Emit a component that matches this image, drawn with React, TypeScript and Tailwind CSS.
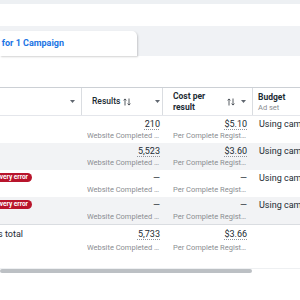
import type { ReactNode } from "react";

type Row = {
  results: string;
  cost: string;
  error?: boolean;
  shaded?: boolean;
};

const rows: Row[] = [
  { results: "210", cost: "$5.10" },
  { results: "5,523", cost: "$3.60", shaded: true },
  { results: "—", cost: "—", error: true },
  { results: "—", cost: "—", error: true, shaded: true },
];

function Caret() {
  return (
    <svg width="5" height="3" viewBox="0 0 5 3" className="shrink-0">
      <path d="M0 0h5L2.5 3z" fill="#606770" />
    </svg>
  );
}

function SortIcon() {
  return (
    <svg width="8" height="8" viewBox="0 0 8 8" className="shrink-0">
      <path
        d="M2 7.5V1M0.6 2.4L2 0.9l1.4 1.5M6 0.5V7M4.6 5.6L6 7.1l1.4-1.5"
        stroke="#444950"
        strokeWidth="0.9"
        fill="none"
      />
    </svg>
  );
}

function Value({ children }: { children: ReactNode }) {
  const dash = children === "—";
  return (
    <div className="h-[11px] text-[9px] leading-[11px] text-[#1c2b33] whitespace-nowrap">
      <span className={dash ? "" : "underline decoration-dotted decoration-[#90949c] underline-offset-2"}>
        {children}
      </span>
    </div>
  );
}

function Sub({ children }: { children: ReactNode }) {
  return (
    <div className="mt-[1px] max-w-[74px] ml-auto truncate text-[7.5px] leading-[9px] text-[#8a8d91]">
      {children}
    </div>
  );
}

export default function App() {
  return (
    <div className="h-[300px] w-[300px] overflow-hidden bg-white font-[Roboto,sans-serif]">
      <div className="h-[4px] bg-[#edf0f3]" />
      <div className="h-[22px] bg-white" />
      <div className="h-[30px] bg-[#f0f2f5] pt-[5px]">
        <div className="flex h-[25px] w-[137px] items-center justify-end overflow-hidden rounded-tr-[5px] bg-white pr-[73px] shadow-[1px_1px_2px_rgba(0,0,0,0.18)]">
          <span className="whitespace-nowrap text-[9px] font-bold text-[#1b74e4]">
            Ad sets for 1 Campaign
          </span>
        </div>
      </div>
      <div className="h-[31px]" />

      <div className="w-[420px]">
        <div className="grid h-[29px] grid-cols-[82px_81px_90px_167px] border-y border-t-[#ccd0d5] border-b-[#e4e6eb] text-[8.5px] font-bold text-[#1c2b33]">
          <div className="flex items-center justify-end border-r border-[#dadde1] pr-[6px]">
            <Caret />
          </div>
          <div className="flex items-center border-r border-[#dadde1] pl-[10px] pr-[2px]">
            <span className="font-medium">Results</span>
            <span className="ml-[3px]">
              <SortIcon />
            </span>
            <span className="ml-auto">
              <Caret />
            </span>
          </div>
          <div className="flex items-center border-r border-[#dadde1] pl-[10px] pr-[6px]">
            <div className="leading-[11px]">
              Cost per
              <br />
              result
            </div>
            <span className="ml-auto mr-[6px]">
              <SortIcon />
            </span>
            <Caret />
          </div>
          <div className="flex flex-col justify-center pl-[5px]">
            <span className="leading-[11px]">Budget</span>
            <span className="text-[7.5px] font-normal leading-[9px] text-[#8a8d91]">Ad set</span>
          </div>
        </div>

        {rows.map((row, i) => (
          <div
            key={i}
            className={`grid h-[27px] grid-cols-[82px_81px_90px_167px] pt-[3px] ${
              row.shaded ? "bg-[#f2f3f5]" : "bg-white"
            }`}
          >
            <div className="flex justify-end overflow-hidden pr-[50px]">
              {row.error && (
                <span className="h-[9px] whitespace-nowrap rounded-full bg-[#b8152c] px-[4px] text-[6.5px] font-bold leading-[9px] text-white">
                  Delivery error
                </span>
              )}
            </div>
            <div className="pl-[5px] pr-[3px] text-right">
              <Value>{row.results}</Value>
              <Sub>Website Completed Registrations</Sub>
            </div>
            <div className="pl-[10px] pr-[6px] text-right">
              <Value>{row.cost}</Value>
              <Sub>Per Complete Registration</Sub>
            </div>
            <div className="whitespace-nowrap pl-[6px] text-[9px] leading-[11px] text-[#1c2b33]">
              Using campaign budget
            </div>
          </div>
        ))}

        <div className="grid h-[34px] grid-cols-[82px_81px_90px_167px] border-t border-[#dadde1] pt-[4px]">
          <div className="flex justify-end overflow-hidden pr-[59px]">
            <span className="whitespace-nowrap text-[9px] leading-[11px] text-[#1c2b33]">
              Results from 4 ad sets total
            </span>
          </div>
          <div className="pl-[5px] pr-[3px] text-right">
            <Value>5,733</Value>
            <div className="mt-[3px]" />
            <Sub>Website Completed Registrations</Sub>
          </div>
          <div className="pl-[10px] pr-[6px] text-right">
            <Value>$3.66</Value>
            <div className="mt-[3px]" />
            <Sub>Per Complete Registration</Sub>
          </div>
          <div />
        </div>

        <div className="mt-[10px] h-[6px] border-t border-[#eef0f2]">
          <div className="h-[4px] w-[252px] rounded-full bg-[#bcc0c4]" />
        </div>
      </div>
    </div>
  );
}
